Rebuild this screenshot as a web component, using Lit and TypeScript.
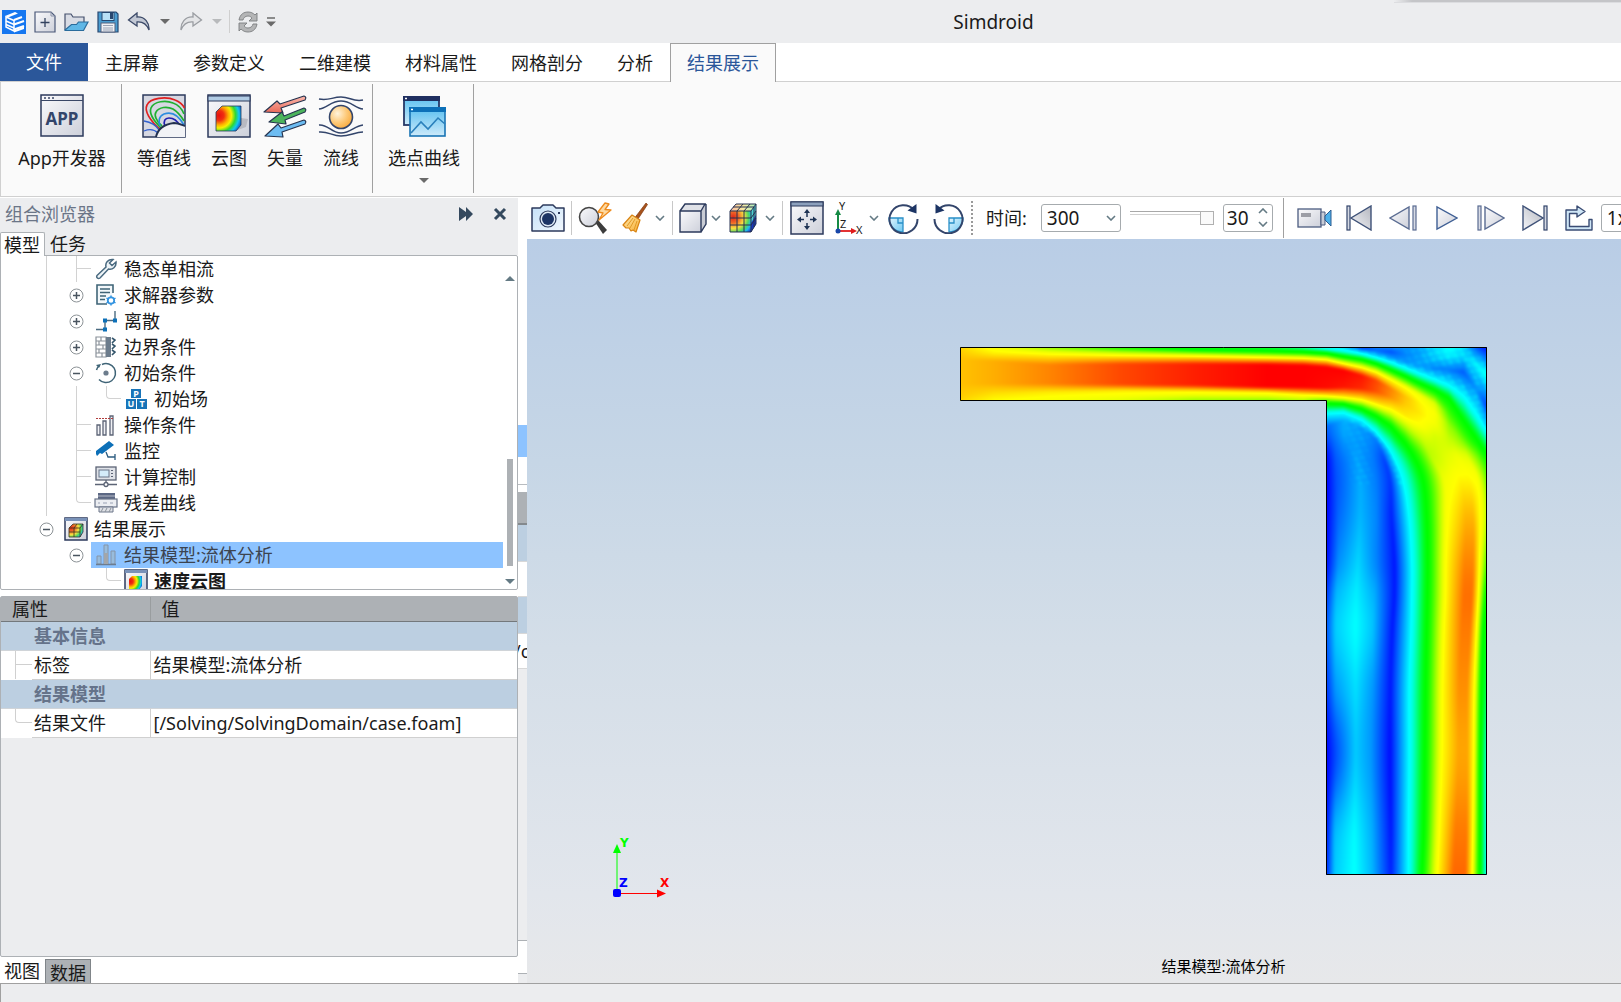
import { LitElement, html, svg, css, nothing } from "lit";
import { customElement, property, state } from "lit/decorators.js";
import { classMap } from "lit/directives/class-map.js";

type Knot = [number, number];
type Profile = { at: number; k: Knot[] };

/* Plot space: 56..1504 across, 48..1524 down. Each profile holds [position, speed] knots. */
const COLUMNS: Profile[] = [
  { at: 56, k: [[40, 0.77], [41, 0.77], [42, 0.77], [43, 0.77], [48, 0.79], [62, 0.8], [85, 0.81], [150, 0.81], [185, 0.8], [199, 0.79], [260, 0.5], [300, 0.3], [420, 0.1]] },
  { at: 150, k: [[40, 0.68], [41, 0.68], [42, 0.68], [44, 0.7], [48, 0.73], [64, 0.76], [88, 0.83], [150, 0.83], [178, 0.78], [199, 0.75], [260, 0.5], [300, 0.3], [420, 0.1]] },
  { at: 300, k: [[40, 0.6], [41, 0.6], [42, 0.6], [44, 0.62], [48, 0.63], [70, 0.76], [98, 0.87], [150, 0.87], [174, 0.77], [199, 0.73], [260, 0.5], [300, 0.3], [420, 0.1]] },
  { at: 500, k: [[40, 0.5], [41, 0.5], [42, 0.5], [44, 0.52], [50, 0.54], [73, 0.76], [96, 0.93], [152, 0.93], [170, 0.77], [199, 0.7], [230, 0.5], [270, 0.3], [420, 0.1]] },
  { at: 700, k: [[36, 0.4], [38, 0.4], [40, 0.4], [42, 0.4], [56, 0.51], [74, 0.75], [96, 0.97], [154, 0.97], [171, 0.77], [198, 0.64], [220, 0.5], [250, 0.3], [420, 0.1]] },
  { at: 900, k: [[36, 0.3], [38, 0.3], [40, 0.3], [42, 0.36], [59, 0.5], [78, 0.75], [97, 1], [159, 1], [174, 0.77], [196, 0.64], [214, 0.5], [240, 0.3], [420, 0.1]] },
  { at: 1000, k: [[36, 0.25], [38, 0.25], [40, 0.25], [46, 0.3], [62, 0.5], [80, 0.75], [99, 1], [160, 1], [180, 0.77], [197, 0.66], [212, 0.5], [240, 0.25], [420, 0.05]] },
  { at: 1063, k: [[48, 0.27], [49, 0.27], [50, 0.26], [52, 0.27], [66, 0.5], [84, 0.75], [104, 1], [162, 0.99], [184, 0.76], [206, 0.5], [235, 0.25], [270, 0.1], [420, 0]] },
  { at: 1110, k: [[48, 0.2], [50, 0.22], [52, 0.23], [57, 0.25], [75, 0.5], [95, 0.75], [113, 1], [160, 0.98], [188, 0.76], [208, 0.5], [232, 0.25], [254, 0.17], [420, 0.14]] },
  { at: 1160, k: [[48, 0.05], [52, 0.08], [58, 0.16], [66, 0.25], [83, 0.5], [106, 0.75], [128, 0.98], [164, 0.96], [193, 0.77], [222, 0.5], [252, 0.25], [276, 0.15], [420, 0.18]] },
  { at: 1200, k: [[48, 0.13], [58, 0.1], [66, 0.16], [77, 0.25], [95, 0.5], [119, 0.75], [142, 0.93], [172, 0.92], [204, 0.78], [242, 0.5], [286, 0.25], [306, 0.12], [420, 0.13]] },
  { at: 1240, k: [[48, 0.14], [62, 0.08], [76, 0.14], [90, 0.25], [112, 0.5], [140, 0.75], [165, 0.87], [188, 0.86], [220, 0.76], [270, 0.5], [342, 0.25], [366, 0.1], [420, 0.05]] },
  { at: 1280, k: [[48, 0.15], [68, 0.13], [90, 0.15], [106, 0.25], [130, 0.5], [162, 0.75], [188, 0.81], [208, 0.8], [240, 0.77], [318, 0.5], [450, 0.25], [500, 0.1], [600, 0.05]] },
  { at: 1320, k: [[48, 0.16], [80, 0.16], [104, 0.16], [122, 0.25], [150, 0.5], [184, 0.73], [205, 0.76], [232, 0.77], [262, 0.75], [392, 0.5], [700, 0.25], [800, 0.2], [900, 0.1]] },
  { at: 1360, k: [[48, 0.22], [78, 0.2], [108, 0.13], [138, 0.25], [168, 0.5], [206, 0.7], [234, 0.74], [262, 0.73], [300, 0.69], [420, 0.65], [700, 0.6], [800, 0.5], [900, 0.4]] },
  { at: 1400, k: [[48, 0.26], [76, 0.23], [112, 0.12], [155, 0.25], [192, 0.5], [240, 0.59], [268, 0.64], [300, 0.67], [340, 0.7], [420, 0.75], [500, 0.75], [600, 0.75], [700, 0.75]] },
  { at: 1440, k: [[48, 0.22], [76, 0.21], [118, 0.09], [184, 0.25], [254, 0.5], [290, 0.57], [320, 0.64], [350, 0.69], [380, 0.73], [420, 0.76], [500, 0.78], [600, 0.8], [700, 0.8]] },
  { at: 1475, k: [[48, 0.08], [95, 0.24], [165, 0.15], [236, 0.25], [305, 0.5], [345, 0.58], [375, 0.66], [400, 0.71], [420, 0.74], [450, 0.76], [500, 0.78], [600, 0.8], [700, 0.8]] },
  { at: 1504, k: [[48, 0.01], [128, 0.27], [215, 0.06], [284, 0.25], [348, 0.5], [385, 0.55], [405, 0.58], [420, 0.6], [450, 0.65], [480, 0.68], [520, 0.68], [600, 0.6], [700, 0.55]] },
];

const ROWS: Profile[] = [
  { at: 250, k: [[1063, 0.12], [1085, 0.18], [1110, 0.2], [1130, 0.2], [1145, 0.22], [1158, 0.25], [1212, 0.5], [1265, 0.73], [1300, 0.77], [1350, 0.74], [1390, 0.62], [1438, 0.5], [1504, 0.16]] },
  { at: 300, k: [[1063, 0.05], [1085, 0.11], [1130, 0.15], [1170, 0.14], [1192, 0.13], [1212, 0.25], [1264, 0.5], [1322, 0.7], [1360, 0.7], [1400, 0.68], [1430, 0.61], [1472, 0.5], [1504, 0.32]] },
  { at: 350, k: [[1063, 0.01], [1088, 0.09], [1145, 0.16], [1190, 0.12], [1218, 0.07], [1244, 0.25], [1300, 0.5], [1348, 0.67], [1385, 0.7], [1420, 0.72], [1448, 0.7], [1480, 0.6], [1504, 0.5]] },
  { at: 420, k: [[1063, 0], [1090, 0.08], [1155, 0.17], [1200, 0.12], [1238, 0.05], [1272, 0.25], [1328, 0.5], [1385, 0.72], [1430, 0.76], [1455, 0.76], [1478, 0.74], [1495, 0.66], [1504, 0.6]] },
  { at: 520, k: [[1063, 0], [1095, 0.1], [1155, 0.18], [1200, 0.13], [1242, 0.03], [1289, 0.25], [1338, 0.5], [1392, 0.74], [1444, 0.82], [1466, 0.82], [1485, 0.75], [1498, 0.7], [1504, 0.65]] },
  { at: 650, k: [[1063, 0.01], [1095, 0.14], [1150, 0.21], [1200, 0.13], [1250, 0.02], [1297, 0.25], [1341, 0.5], [1391, 0.75], [1442, 0.87], [1466, 0.87], [1483, 0.75], [1499, 0.62], [1504, 0.58]] },
  { at: 740, k: [[1063, 0.05], [1090, 0.18], [1145, 0.235], [1195, 0.17], [1250, 0.02], [1297, 0.25], [1340, 0.5], [1390, 0.75], [1440, 0.89], [1463, 0.89], [1480, 0.75], [1497, 0.55], [1504, 0.51]] },
  { at: 840, k: [[1063, 0.08], [1088, 0.2], [1143, 0.25], [1190, 0.19], [1244, 0.02], [1295, 0.25], [1338, 0.5], [1386, 0.75], [1434, 0.88], [1458, 0.88], [1475, 0.75], [1494, 0.5], [1504, 0.47]] },
  { at: 1000, k: [[1063, 0.05], [1088, 0.15], [1143, 0.22], [1190, 0.15], [1239, 0.02], [1290, 0.25], [1335, 0.5], [1382, 0.75], [1427, 0.86], [1450, 0.86], [1469, 0.75], [1489, 0.5], [1504, 0.4]] },
  { at: 1190, k: [[1063, 0], [1090, 0.08], [1143, 0.2], [1185, 0.15], [1238, 0.01], [1290, 0.25], [1333, 0.5], [1380, 0.75], [1425, 0.84], [1450, 0.84], [1467, 0.75], [1486, 0.5], [1504, 0.3]] },
  { at: 1400, k: [[1063, 0.02], [1086, 0.18], [1140, 0.245], [1188, 0.17], [1240, 0.02], [1288, 0.25], [1330, 0.5], [1373, 0.75], [1417, 0.88], [1448, 0.88], [1465, 0.75], [1485, 0.5], [1504, 0.27]] },
  { at: 1524, k: [[1063, 0.04], [1086, 0.2], [1140, 0.255], [1188, 0.18], [1240, 0.03], [1288, 0.25], [1325, 0.5], [1368, 0.75], [1412, 0.9], [1445, 0.9], [1463, 0.75], [1484, 0.5], [1504, 0.26]] },
];

const clamp = (v: number) => Math.max(0, Math.min(1, v));
const smooth = (t: number) => t * t * (3 - 2 * t);

function segment(list: Profile[], at: number): [number, number] {
  let i = 0;
  while (i < list.length - 2 && at > list[i + 1].at) i++;
  return [i, clamp((at - list[i].at) / (list[i + 1].at - list[i].at))];
}

function linearProfile(list: Profile[], at: number): Knot[] {
  const [i, t] = segment(list, at);
  const a = list[i].k;
  const b = list[i + 1].k;
  return a.map((p, n) => [p[0] + (b[n][0] - p[0]) * t, p[1] + (b[n][1] - p[1]) * t] as Knot);
}

function curvedProfile(list: Profile[], at: number): Knot[] {
  const [i, t] = segment(list, at);
  const span = list[i + 1].at - list[i].at;
  const slope = (j: number, n: number, c: 0 | 1) => {
    const lo = list[Math.max(0, j - 1)];
    const hi = list[Math.min(list.length - 1, j + 1)];
    return ((hi.k[n][c] - lo.k[n][c]) / (hi.at - lo.at)) * span;
  };
  const t2 = t * t;
  const t3 = t2 * t;
  const mix = (n: number, c: 0 | 1) =>
    (2 * t3 - 3 * t2 + 1) * list[i].k[n][c] + (t3 - 2 * t2 + t) * slope(i, n, c) +
    (3 * t2 - 2 * t3) * list[i + 1].k[n][c] + (t3 - t2) * slope(i + 1, n, c);
  return list[i].k.map((_, n) => [mix(n, 0), mix(n, 1)] as Knot);
}

function sample(k: Knot[], p: number): number {
  if (p <= k[0][0]) return k[0][1];
  for (let i = 1; i < k.length; i++) {
    if (p <= k[i][0]) {
      const t = (p - k[i - 1][0]) / Math.max(0.001, k[i][0] - k[i - 1][0]);
      return k[i - 1][1] + (k[i][1] - k[i - 1][1]) * t;
    }
  }
  return k[k.length - 1][1];
}

/* Hue ramp from blue to red that lingers on its cyan, green and yellow stops. */
function rainbow(v: number): [number, number, number] {
  const raw = clamp(v) * 4;
  const band = Math.min(3, Math.floor(raw));
  const part = raw - band;
  const t = (band === 1 || band === 2 ? smooth(part) * 0.7 + part * 0.3 : part) * 255;
  if (band === 0) return [0, t, 255];
  if (band === 1) return [0, 255, 255 - t];
  if (band === 2) return [t, 255, 0];
  return [255, 255 - t, 0];
}

@customElement("flow-field")
export class FlowField extends LitElement {
  static styles = css`
    :host { display: block; }
    canvas { display: block; width: 100%; height: 100%; }
  `;
  private w = 527;
  private h = 528;

  firstUpdated() {
    const canvas = this.renderRoot.querySelector("canvas") as HTMLCanvasElement;
    const ctx = canvas.getContext("2d")!;
    const { w, h } = this;
    const px = (i: number) => 56 + ((i + 0.5) / w) * 1448;
    const py = (j: number) => 48 + ((j + 0.5) / h) * 1476;
    const cols = Array.from({ length: w }, (_, i) => linearProfile(COLUMNS, px(i)));
    const rows = Array.from({ length: h }, (_, j) => curvedProfile(ROWS, py(j)));
    const edgeX = 366;
    const edgeY = 53;
    let field = new Float32Array(w * h);
    for (let j = 0; j < h; j++) {
      const y = py(j);
      const mix = smooth(clamp((y - 265) / 110));
      for (let i = 0; i < w; i++) {
        if (i < edgeX && j > edgeY + 6) continue;
        const x = px(i);
        const c = mix < 1 ? sample(cols[i], y) : 0;
        const r = mix > 0 ? sample(rows[j], x) : 0;
        let v = c * (1 - mix) + r * mix;
        /* stair-stepped mesh cells along the edge of the slow zones */
        if (i > 380 && v < 0.26 && y < 430) {
          const near = clamp(1 - Math.abs(v - 0.19) / 0.07);
          const saw = (((x - y * 0.5) / 22) % 1 + 1) % 1;
          const step = (((y + x * 0.2) / 18) % 1 + 1) % 1;
          v += (saw * step - 0.25) * 0.07 * near * clamp((x - 1100) / 60);
        }
        field[j * w + i] = v;
      }
    }
    for (let pass = 0; pass < 2; pass++) {
      const out = new Float32Array(w * h);
      for (let j = 0; j < h; j++) {
        for (let i = 0; i < w; i++) {
          if (i < edgeX && j > edgeY + 2) continue;
          let s = 0;
          let m = 0;
          for (let b = -1; b <= 1; b++) {
            for (let a = -1; a <= 1; a++) {
              const x = i + a;
              const y = j + b;
              if (x < 0 || y < 0 || x >= w || y >= h) continue;
              if (x < edgeX && y > edgeY + 2) continue;
              s += field[y * w + x];
              m++;
            }
          }
          out[j * w + i] = s / m;
        }
      }
      field = out;
    }
    const img = ctx.createImageData(w, h);
    for (let j = 0; j < h; j++) {
      for (let i = 0; i < w; i++) {
        if (i < edgeX && j > edgeY) continue;
        const [r, g, b] = rainbow(field[j * w + i]);
        const o = (j * w + i) * 4;
        img.data[o] = r;
        img.data[o + 1] = g;
        img.data[o + 2] = b;
        img.data[o + 3] = 255;
      }
    }
    ctx.putImageData(img, 0, 0);
    ctx.strokeStyle = "#000";
    ctx.lineWidth = 1;
    ctx.beginPath();
    ctx.moveTo(0.5, 0.5);
    ctx.lineTo(w - 0.5, 0.5);
    ctx.lineTo(w - 0.5, h - 0.5);
    ctx.lineTo(edgeX + 0.5, h - 0.5);
    ctx.lineTo(edgeX + 0.5, edgeY + 0.5);
    ctx.lineTo(0.5, edgeY + 0.5);
    ctx.closePath();
    ctx.stroke();
  }

  render() {
    return html`<canvas width=${this.w} height=${this.h} role="img" aria-label="速度云图"></canvas>`;
  }
}

const N = "#2c3a5c";

const defs = html`<svg class="defs" width="0" height="0" aria-hidden="true"><defs>
  <linearGradient id="gSteel" x1="0" y1="0" x2="1" y2="1"><stop offset="0" stop-color="#fafafc"/><stop offset="1" stop-color="#cdd0da"/></linearGradient>
  <linearGradient id="gSteelR" x1="0" y1="1" x2="1" y2="0"><stop offset="0" stop-color="#f4f5f8"/><stop offset="1" stop-color="#b4b7c0"/></linearGradient>
  <linearGradient id="gBlue" x1="0" y1="0" x2="0" y2="1"><stop offset="0" stop-color="#5bc0f0"/><stop offset="1" stop-color="#cdeafa"/></linearGradient>
  <linearGradient id="gSky" x1="0" y1="0" x2="1" y2="1"><stop offset="0" stop-color="#c4e0f8"/><stop offset="1" stop-color="#f2f8fd"/></linearGradient>
  <linearGradient id="gQuad" x1="0" y1="0" x2="1" y2="1"><stop offset="0" stop-color="#e2f5fe"/><stop offset="1" stop-color="#6cc8f2"/></linearGradient>
  <linearGradient id="gRed" x1="0" y1="0" x2="0" y2="1"><stop offset="0" stop-color="#fcb8ac"/><stop offset="1" stop-color="#e86858"/></linearGradient>
  <radialGradient id="gOrb" cx=".35" cy=".35" r=".8"><stop offset="0" stop-color="#fff3dc"/><stop offset=".5" stop-color="#fdc978"/><stop offset="1" stop-color="#f6a02c"/></radialGradient>
  <radialGradient id="gHeat" cx=".12" cy=".38" r="1"><stop offset="0" stop-color="#e81010"/><stop offset=".2" stop-color="#f03010"/><stop offset=".38" stop-color="#ffb000"/><stop offset=".5" stop-color="#f6f000"/><stop offset=".66" stop-color="#30d830"/><stop offset=".8" stop-color="#10c8f0"/><stop offset="1" stop-color="#1030c0"/></radialGradient>
  <radialGradient id="gCube" cx=".15" cy=".3" r="1.05"><stop offset="0" stop-color="#e02818"/><stop offset=".25" stop-color="#f06828"/><stop offset=".5" stop-color="#f8e040"/><stop offset=".7" stop-color="#50d860"/><stop offset=".85" stop-color="#20b8f0"/><stop offset="1" stop-color="#1838c8"/></radialGradient>
  <linearGradient id="gTop" x1="0" y1="0" x2="1" y2="0"><stop offset="0" stop-color="#f8b8a0"/><stop offset=".5" stop-color="#f8e8a0"/><stop offset="1" stop-color="#a8f0c0"/></linearGradient>
  <linearGradient id="gFlame" x1="0" y1="0" x2="1" y2="1"><stop offset="0" stop-color="#ffe9b0"/><stop offset="1" stop-color="#f8ae30"/></linearGradient>
</defs></svg>`;

const windowFrame = (w: number, h: number) => svg`
  <rect x="1" y="1" width="${w - 2}" height="${h - 2}" fill="url(#gSteel)" stroke="${N}" stroke-width="1.5"/>`;

const ICONS: Record<string, [number, number, unknown]> = {
  logo: [24, 24, svg`<rect width="24" height="24" fill="#1677f0"/>
    <g fill="none" stroke="#fff" stroke-width="2"><path d="M12 10 20 7M12 14.500 22 11M12 19.500 22 16"/><path d="M4 7v10l8 4V10.500z" stroke-width="1.500"/><path d="M4 11l8 3.500M4 14.500l8 3.500" stroke-width="1.500"/></g>
    <path d="M3 6 13 2l3 1.500L6 7.500zM12 20.500 22 16.500v2.500l-10 3.500z" fill="#fff"/>`],
  fresh: [22, 22, svg`<path d="M1 1h16l4 4v16H1z" fill="url(#gSteel)" stroke="#4a5878" stroke-width="1.200"/><path d="M17 1v4h4" fill="none" stroke="#8a93a8"/><path d="M11 7v9M6.500 11.500h9" stroke="#33425f" stroke-width="1.300"/>`],
  open: [25, 20, svg`<path d="M1 18V2h6l2 3h11v5" fill="#d9dce4" stroke="#44506c" stroke-width="1.200"/><path d="M1 18 7.500 12.500h5l2-2.500H24l-4.500 8.500H1z" fill="#5fb7e6" stroke="#2a6c9c" stroke-width="1.200"/>`],
  save: [22, 22, svg`<path d="M1 1h18l2 2v18H1z" fill="#4a9cd0" stroke="#27476f" stroke-width="1.200"/><rect x="5" y="1.500" width="12" height="8" fill="#b8e0f6" stroke="#27476f"/><rect x="13" y="2" width="3" height="6" fill="#27476f"/><rect x="4" y="12" width="14" height="9" fill="#eef0f4" stroke="#55617c"/><path d="M6 14.500h10M6 17h10M6 19h10" stroke="#9aa2b4"/>`],
  undo: [24, 20, svg`<path d="M10 1 1.500 8 10 14v-4c6-.5 10 3 12 8 .5-7-4-13.500-12-13z" fill="#c2c8d4" stroke="#3c4a68" stroke-width="1.300"/>`],
  redo: [24, 20, svg`<path d="M14 1l8.500 7-8.500 6v-4C8 9.500 4 13 2 18 1.500 11 6 4.500 14 5z" fill="#e4e5e7" stroke="#9a9da2" stroke-width="1.300"/>`],
  sync: [20, 22, svg`<path d="M1 9C2 3 6 1 10 1c3 0 5 1 7 3l2-2v8h-8l3-3c-1-1-2-2-4-2-3 0-4.500 2-5 4z" fill="#b4b5b6" stroke="#7c7e80" stroke-width=".9"/><path d="M19 13c-1 6-5 8-9 8-3 0-5-1-7-3l-2 2v-8h8l-3 3c1 1 2 2 4 2 3 0 4.500-2 5-4z" fill="#b4b5b6" stroke="#7c7e80" stroke-width=".9"/>`],
  more: [10, 10, svg`<path d="M1 1h8" stroke="#6a6a6a" stroke-width="1.500"/><path d="M0 4.500h10L5 9.500z" fill="#6a6a6a"/>`],
  app: [44, 44, svg`${windowFrame(44, 43)}<path d="M1 6.500h42" stroke="#3a4766"/><path d="M4 4h2M8 4h2M12 4h2" stroke="#3a4766" stroke-width="1.500"/><text x="22" y="31" text-anchor="middle" class="appword">APP</text>`],
  contour: [44, 44, svg`<rect x="1" y="1" width="42" height="42" fill="#d6d8e2" stroke="${N}" stroke-width="1.500"/>
    <g fill="none" stroke-width="1.700"><path d="M19 36C8 27 2 17 5 11 8 4 24 2 33 6c5 2 8 5 9.500 8" stroke="#e02020"/><path d="M19 34C11 26 7 19 9 14c3-7 15-8 22-5 6 2 9 6 11 11" stroke="#20b030"/><path d="M20 32c-6-5-8-11-6-14 3-5 11-6 17-3 5 3 8 7 11 12" stroke="#20b030"/><path d="M18 32c-2-5-1-10 4-12 8-3 15 2 20 11" stroke="#2c8ce0"/><path d="M23 32c-2-5 0-8 4-8 5 0 9 4 11 8" stroke="#2020b0"/><path d="M2 27c6 1 12 4 15 9M2 37c5-2 10-2 14 2" stroke="#3060d0" stroke-width="1.300"/></g>
    <path d="M14 43c2-9 10-13 18-14 4 0 8 2 11 3v11z" fill="#f2f3f6"/><path d="M14 43c2-9 10-13 18-14 4 0 8 2 11 3" fill="none" stroke="#22304e" stroke-width="2"/>`],
  cloud: [44, 44, svg`${windowFrame(44, 44)}<rect x="1" y="2" width="42" height="5" fill="#b0cbe4" stroke="${N}"/><path d="M34 24l7 1-2 8-11 4z" fill="#b8bac2"/><path d="M15 12h19v19l-5 6H9V18z" fill="url(#gHeat)" stroke="#263a5a" stroke-width=".8"/>`],
  vector: [44, 44, svg`<g stroke="#26344f" stroke-width="1.200" stroke-linejoin="round"><path d="M17 10 41 2q3 1 1 4L18 14l2 5-19-1L14 7z" fill="url(#gRed)"/><path d="M21 22 41 14q3 1 1 4L22 26l1 4-17-2 13-10z" fill="#4cb45c"/><path d="M18 34 41 26q3 1 1 4L19 38l1 5-18-1 13-12z" fill="#6cbcf2"/></g>`],
  stream: [46, 44, svg`<g fill="none" stroke="#33456b" stroke-width="1.500"><path d="M1 5c10 2 13-2 22-2s12 5 22 3M1 15c8-1 12-8 22-8s14 7 22 8M1 31c9-1 12 8 22 8s13-7 22-8M1 38c9-1 13 4 22 4s14-4 22-4"/></g><circle cx="23" cy="23" r="11.500" fill="url(#gOrb)" stroke="#33456b" stroke-width="1.600"/>`],
  curves: [44, 44, svg`<rect x="2" y="3" width="35" height="28" fill="url(#gBlue)" stroke="#263866" stroke-width="1.800"/><rect x="1" y="2" width="37" height="5" fill="#1f2f60"/><rect x="8" y="14" width="35" height="28" fill="url(#gBlue)" stroke="#1874b4" stroke-width="1.600"/><rect x="7" y="13" width="37" height="5" fill="#0c70b8"/><path d="M9 39 19 28l7 7L36 24l7 6" fill="none" stroke="#2a80bc" stroke-width="1.600"/><path d="M3 4.500h2M9 15.500h2" stroke="#fff" stroke-width="1.500"/>`],
  pin: [16, 16, svg`<path d="M1 1l7 5V1l7 7-7 7V10l-7 5z" fill="#34495e"/>`],
  close: [14, 14, svg`<path d="M2 2l10 10M12 2 2 12" stroke="#34495e" stroke-width="3"/>`],
  camera: [34, 28, svg`<path d="M1 4h8l3-3h10l3 3h8v23H1z" fill="url(#gSky)" stroke="${N}" stroke-width="1.500" stroke-linejoin="round"/><circle cx="17" cy="15" r="8" fill="#dfeaf5" stroke="${N}" stroke-width="1.200"/><circle cx="17" cy="15" r="6" fill="#1c3464"/><rect x="27" y="8" width="2" height="2" fill="${N}"/>`],
  magnify: [34, 32, svg`<path d="M17 20l3-2 9 10-4 4z" fill="#3c3c3c"/><circle cx="11" cy="15" r="9.500" fill="url(#gSteel)" stroke="#444" stroke-width="1.600"/><path d="M27 1 20 10l5 1-4 7 12-10-6-.5 4-5.500z" fill="#fdd9a0" stroke="#ee8a1c" stroke-width="1.300" stroke-linejoin="round"/>`],
  broom: [26, 32, svg`<path d="M24 1l1.500 1.500L16 17l-3-1.500z" fill="#a8521c" stroke="#7c3a10" stroke-width=".7"/><path d="M10 13l8 5-4 12-3-2-2 1-2-3-3 0-3-3z" fill="url(#gFlame)" stroke="#d88414" stroke-width="1.200" stroke-linejoin="round"/><path d="M8 26l5-9M12 28l3-9M5 24l6-8" stroke="#e09a28" fill="none"/>`],
  cube: [28, 30, svg`<path d="M1 9 6 1h21v20l-4 8H1z" fill="#c9ccd4"/><rect x="1" y="8" width="21" height="21" fill="url(#gSteel)"/><path d="M1 8l5-7h21l-5 7z" fill="#dfe1e7"/><path d="M1 8h21v21H1zM1 8l5-7h20l-4 7M27 1v20l-5 8" fill="none" stroke="${N}" stroke-width="1.400"/>`],
  meshcube: [28, 30, svg`<rect x="1" y="8" width="21" height="21" fill="url(#gCube)"/><path d="M1 8l6-7h20l-5 7z" fill="url(#gTop)"/><path d="M22 8l5-7v20l-5 8z" fill="#4fd0d0"/><path d="M22 20l5-8v9l-5 8z" fill="#1838c0"/><path d="M1 8h21v21H1zM1 8l6-7h20l-5 7M27 1v20l-5 8M8 8v21M15 8v21M1 15h21M1 22h21M8 8l6-7M15 8l6-7M4 4h21v20M22 15l5-7M22 22l5-7" fill="none" stroke="#263050" stroke-width="1"/>`],
  fit: [34, 34, svg`<rect x="1" y="1" width="32" height="32" fill="url(#gSteel)" stroke="${N}" stroke-width="1.500"/><rect x="1" y="1" width="32" height="4" fill="#8ca0bc" stroke="${N}"/><path d="M17 11v5M17 22v5M9 18.500h5M20 18.500h5" stroke="#1e3354" stroke-width="1.500"/><path d="M17 8l3 4h-6zM17 29l3-4h-6zM7 18.500l4-3v6zM27 18.500l-4-3v6z" fill="#1e3354"/>`],
  axes: [30, 34, svg`<path d="M4 30V12" stroke="#168a44" stroke-width="2"/><path d="M4 8l3 6H1z" fill="#168a44"/><path d="M4 30h14" stroke="#e01c1c" stroke-width="1.800"/><path d="M23 30l-6-3v6z" fill="#e01c1c"/><circle cx="4" cy="30" r="2.500" fill="#1846a8"/><text x="5" y="9" class="axisword">Y</text><text x="6" y="27" class="axisword">Z</text><text x="22" y="33" class="axisword">X</text>`],
  rotcw: [32, 32, svg`<path d="M16 16H2c0 8 6 14 14 14z" fill="url(#gQuad)" stroke="#2a90c8" stroke-width="1.300"/><path d="M11 16v5h5" fill="none" stroke="#2a90c8" stroke-width="1.300"/><path d="M27 8A14 14 0 1 0 30.500 17" fill="none" stroke="#33456b" stroke-width="2"/><path d="M29.500 2v9.500l-9-3z" fill="#1c3464"/>`],
  rotccw: [32, 32, svg`<path d="M16 16h14c0 8-6 14-14 14z" fill="url(#gQuad)" stroke="#2a90c8" stroke-width="1.300"/><path d="M21 16v5h-5" fill="none" stroke="#2a90c8" stroke-width="1.300"/><path d="M5 8A14 14 0 1 1 1.500 17" fill="none" stroke="#33456b" stroke-width="2"/><path d="M2.500 2v9.500l9-3z" fill="#1c3464"/>`],
  video: [36, 20, svg`<rect x="1" y="1" width="23" height="18" fill="url(#gSteel)" stroke="#4c5c80" stroke-width="1.300"/><rect x="4" y="5" width="10" height="4" fill="#9c9ea6"/><path d="M24 4h4v13h-4z" fill="#c8ccd6" stroke="#4c5c80"/><path d="M28 8l6-6v16l-6-6z" fill="#4cb0ea" stroke="#2c5c90"/>`],
  first: [26, 26, svg`<rect x="1" y="1" width="3" height="24" fill="#d6dae4" stroke="#33456b" stroke-width="1.200"/><path d="M25 1v24L5 13z" fill="url(#gSteelR)" stroke="#3f5278" stroke-width="1.400"/>`],
  prev: [28, 26, svg`<path d="M20 2v22L1 13z" fill="url(#gSteel)" stroke="#5a6c92" stroke-width="1.400"/><rect x="24" y="1" width="3" height="24" fill="#d6dae4" stroke="#5a6c92" stroke-width="1.200"/>`],
  play: [22, 26, svg`<path d="M1 2v22l20-11z" fill="url(#gSteel)" stroke="#3f5f94" stroke-width="1.400"/>`],
  next: [28, 26, svg`<path d="M8 2v22l19-11z" fill="url(#gSteel)" stroke="#5a6c92" stroke-width="1.400"/><rect x="1" y="1" width="3" height="24" fill="#d6dae4" stroke="#5a6c92" stroke-width="1.200"/>`],
  last: [26, 26, svg`<rect x="22" y="1" width="3" height="24" fill="#d6dae4" stroke="#33456b" stroke-width="1.200"/><path d="M1 1v24l20-12z" fill="url(#gSteelR)" stroke="#3f5278" stroke-width="1.400"/>`],
  loop: [28, 26, svg`<path d="M1 5h11V1l8 5.500-8 5.500V8.500H4.500v13H24v-7h3v10.500H1z" fill="#cfe6f6" stroke="#3a4c74" stroke-width="1.400" stroke-linejoin="round"/>`],
  wrench: [22, 22, svg`<path d="M2 17.500 11 9c-1-4 2-8 7-7.500L14.500 5l2.500 2.500L21 4c.5 5-3.500 8-7.500 7L5 20c-2 1.500-4-.5-3-2.500z" fill="#eef4f7" stroke="#4a6a80" stroke-width="1.500"/>`],
  solver: [22, 22, svg`<path d="M18 9V1H2v19h10" fill="#f2f7fa" stroke="#3f6477" stroke-width="1.600"/><path d="M5 5h10M5 8.500h10M5 12h6M5 15.500h5" stroke="#3f6477" stroke-width="1.400"/><circle cx="16" cy="16.500" r="3.200" fill="#fff" stroke="#3494e0" stroke-width="1.800"/><path d="M16 11.500v2M16 19.500v2M11.500 14l1.500 1M19 18l1.500 1M11.500 19l1.500-1M19 15l1.500-1" stroke="#3494e0" stroke-width="1.500"/>`],
  discrete: [22, 22, svg`<path d="M1 19.500h9V10.500h10V1" fill="none" stroke="#4a6a80" stroke-width="1.400"/><path d="M8 17.500h4v4H8zM8 8.500h4v4H8zM18 8.500h4v4h-4z" fill="#0d70b8"/>`],
  brick: [22, 22, svg`<path d="M1 1h10v20H1zM1 5h10M1 9h10M1 13h10M1 17h10M6 1v4M4 5v4M8 9v4M4 13v4M7 17v4" fill="#fff" stroke="#8a929a" stroke-width="1.200"/><rect x="11" y="1" width="5" height="20" fill="#6c7c8c"/><path d="M17 2l3 2-3 3M17 8l3 2-3 3M17 14l3 2-3 3" fill="none" stroke="#34566c" stroke-width="1.600"/>`],
  initial: [22, 22, svg`<path d="M7 2.500A9.500 9.500 0 1 1 4 17.500M1.500 8C2 6 3 4.500 4.500 3.500" fill="none" stroke="#3f6477" stroke-width="1.500"/><circle cx="11" cy="11" r="2.600" fill="#6c7c8c"/><path d="M1 3l5-1-2 4z" fill="#3f6477"/>`],
  blocks: [22, 22, svg`<path d="M6 1h10v9H6zM1 11h10v10H1zM12 11h10v10H12z" fill="#1874b8"/><text x="11" y="9" text-anchor="middle" class="blockword">P</text><text x="6" y="19" text-anchor="middle" class="blockword">U</text><text x="17" y="19" text-anchor="middle" class="blockword">T</text>`],
  bars: [22, 22, svg`<path d="M2 11h3v10H2zM8 7h3v14H8zM15 2h3v19h-3z" fill="#f0f1f5" stroke="#5c6476" stroke-width="1.300"/><path d="M1 4.500h18" stroke="#b03c3c" stroke-dasharray="2 1"/>`],
  monitor: [22, 22, svg`<path d="M1 11 14 1l5 4L7 14l-2-1-3 3-1-2z" fill="#0d70b8"/><path d="M11 12l2 5h7M20 14v6" fill="none" stroke="#2c5c80" stroke-width="1.300"/>`],
  compute: [24, 22, svg`<rect x="2" y="1" width="20" height="13" fill="#dfe2e8" stroke="#5c6476" stroke-width="1.300"/><rect x="5" y="4" width="10" height="7" fill="#d4ecfa" stroke="#6a7488"/><path d="M18 4v1M18 7v1M18 10v1" stroke="#5c6476" stroke-width="2"/><path d="M12 14v3M1 18.500h9M14 18.500h9" stroke="#5c6476" stroke-width="1.300"/><circle cx="12" cy="18.500" r="2" fill="none" stroke="#5c6476" stroke-width="1.300"/>`],
  residual: [24, 22, svg`<rect x="4" y="1" width="17" height="7" fill="#5c6884"/><path d="M4 4h17" stroke="#b8bcc8"/><rect x="1" y="7" width="22" height="8" fill="#eceef2" stroke="#6a7488" stroke-width="1.200"/><path d="M4 11h2M9 11h4M16 11h3" stroke="#9aa2b4"/><path d="M5 15h14v5H5z" fill="#dfe1e6" stroke="#6a7488"/><path d="M7 20l2-4M11 20l2-4M15 20l2-4" stroke="#8a929a"/>`],
  results: [24, 24, svg`<rect x="1" y="1" width="22" height="22" fill="url(#gSteel)" stroke="${N}" stroke-width="1.500"/><rect x="1" y="1" width="22" height="3" fill="#7a92b8"/><path d="M5 11l4-4h10v8l-3 5H5z" fill="url(#gCube)" stroke="#3a3020" stroke-width=".8"/><path d="M5 11h11v9M16 11l3-4M10 11v9M5 15h11M13 7l-3 4" stroke="#3a3020" stroke-width=".8" fill="none"/>`],
  ghost: [22, 22, svg`<path d="M2 12h4v8H2zM9 1h4v19H9zM16 7h4v13h-4z" fill="#98bcdc" stroke="#8494a8"/><path d="M1 20.500h20" stroke="#6c7c90" stroke-width="1.300"/><path d="M9 9h4v11H9z" fill="#a2a6aa"/>`],
  speed: [24, 24, svg`<rect x="1" y="1" width="22" height="22" fill="url(#gSteel)" stroke="${N}" stroke-width="1.500"/><rect x="1" y="1" width="22" height="3" fill="#7a92b8"/><path d="M8 7h10v10l-3 4H5V10z" fill="url(#gHeat)"/>`],
};

const icon = (name: string) => {
  const [w, h, body] = ICONS[name];
  return html`<svg class="icon" width=${w} height=${h} viewBox="0 0 ${w} ${h}" aria-hidden="true">${body}</svg>`;
};

const caret = (up = false) => html`<svg class="caret" width="10" height="6" viewBox="0 0 10 6" aria-hidden="true">
  <path d=${up ? "M1 5l4-4 4 4" : "M1 1l4 4 4-4"} fill="none" stroke="#647a84" stroke-width="1.6"/></svg>`;

const wedge = (tone: string, up = false) => html`<svg class="wedge" width="10" height="6" viewBox="0 0 10 6" aria-hidden="true">
  <path d=${up ? "M0 5h10L5 0z" : "M0 0h10L5 5z"} fill=${tone}/></svg>`;

type Guide = "none" | "line" | "tee" | "end" | "plus" | "minus";
interface Row { guides: Guide[]; icon: string; text: string; on?: boolean; strong?: boolean; }

const TREE: Row[] = [
  { guides: ["line", "tee"], icon: "wrench", text: "稳态单相流" },
  { guides: ["line", "plus"], icon: "solver", text: "求解器参数" },
  { guides: ["line", "plus"], icon: "discrete", text: "离散" },
  { guides: ["line", "plus"], icon: "brick", text: "边界条件" },
  { guides: ["line", "minus"], icon: "initial", text: "初始条件" },
  { guides: ["line", "line", "end"], icon: "blocks", text: "初始场" },
  { guides: ["line", "tee"], icon: "bars", text: "操作条件" },
  { guides: ["line", "tee"], icon: "monitor", text: "监控" },
  { guides: ["line", "tee"], icon: "compute", text: "计算控制" },
  { guides: ["line", "end"], icon: "residual", text: "残差曲线" },
  { guides: ["minus"], icon: "results", text: "结果展示" },
  { guides: ["none", "minus"], icon: "ghost", text: "结果模型:流体分析", on: true },
  { guides: ["none", "none", "end"], icon: "speed", text: "速度云图", strong: true },
];

const TABS = ["主屏幕", "参数定义", "二维建模", "材料属性", "网格剖分", "分析", "结果展示"];
const MEDIA: [string, string][] = [
  ["video", "录制"], ["first", "首帧"], ["prev", "上一帧"], ["play", "播放"],
  ["next", "下一帧"], ["last", "末帧"], ["loop", "循环"],
];

@customElement("app-root")
export class AppRoot extends LitElement {
  @property() name = "Simdroid";
  @state() private tab = "结果展示";
  @state() private frame = 30;

  static styles = css`
    :host {
      display: flex; flex-direction: column; height: 100vh; overflow: hidden;
      font-family: "Noto Sans", "Noto Sans CJK SC", sans-serif;
      font-size: 18px; line-height: 26px; color: #1a1a1a; background: #ecedef;
    }
    * { box-sizing: border-box; }
    button, input, select { font: inherit; color: inherit; margin: 0; padding: 0; border: 0; background: none; }
    button { display: flex; align-items: center; justify-content: center; white-space: nowrap; }
    svg { display: block; flex: none; }
    .defs { position: absolute; }
    .appword { font: bold 17px "Noto Sans", sans-serif; fill: #33456b; }
    .axisword { font: 11px "Noto Sans", sans-serif; fill: #222; }
    .blockword { font: bold 9px "Noto Sans", sans-serif; fill: #fff; }

    .titlebar { position: relative; display: flex; align-items: center; height: 43px; flex: none; padding-left: 2px; }
    .titlebar::after { content: ""; position: absolute; top: 0; right: 0; width: 14%; height: 2px; background: linear-gradient(90deg, #ecedef, #c4c5c8 8%); border-bottom: 1px solid #dcdde0; }
    .quick { display: flex; align-items: center; gap: 8px; }
    .quick .drop { width: 12px; }
    .quick .bar { width: 1px; height: 23px; background: #cfcfcf; margin: 0 0 0 -2px; }
    .title { flex: 1; text-align: center; padding-left: 90px; font-size: 19px; }
    .title h1 { font: inherit; margin: 0; }

    .tabs { display: flex; height: 39px; flex: none; background: #fff; border-bottom: 1px solid #d0d0d0; }
    .tabs button { padding: 0 17px; height: 39px; }
    .tabs .file { padding: 0 26px; background: #2b579a; color: #fff; height: 38px; }
    .tabs .active { color: #2b579a; background: #fafafa; border: 1px solid #a0a0a0; border-bottom: 0; padding: 0 16px; }

    .ribbon { display: flex; height: 115px; flex: none; background: #fafafa; border-left: 1px solid #d0d0d0; border-bottom: 1px solid #d0d0d0; padding: 2px 0 3px; }
    .group { display: flex; justify-content: center; border-right: 1px solid #a0a0a0; padding: 0 3px 0 5px; }
    .group:first-child { min-width: 121px; }
    .group button { flex-direction: column; justify-content: flex-start; padding: 10px 10px 0; gap: 7px; }
    .group .icon { margin: 0 -6px; height: 44px; }

    .main { display: flex; flex: 1; min-height: 0; background: #fff; padding-top: 1px; }
    .side { display: flex; flex-direction: column; width: 518px; flex: none; }
    .sidehead { display: flex; align-items: center; height: 34px; flex: none; background: #ecedef; padding: 0 11px 2px 5px; color: #6b7587; }
    .sidehead h2 { font: inherit; margin: 0; flex: 1; }
    .sidehead button { margin-left: 19px; }
    .sidetabs { display: flex; height: 23px; flex: none; background: #ecedef; }
    .sidetabs button { padding: 0 4px 0 5px; height: 24px; }
    .sidetabs .active { background: #fff; border: 1px solid #adb1b5; border-bottom: 0; padding: 0 4px 0 3px; z-index: 1; border-radius: 2px 2px 0 0; }
    .tree { display: flex; height: 335px; flex: none; background: #fff; border: 1px solid #adb1b5; border-radius: 0 2px 2px 2px; overflow: hidden; }
    .rows { flex: 1; list-style: none; margin: 0; padding: 0 0 0 30px; }
    .row { display: flex; height: 26px; }
    .guide { width: 30px; flex: none; display: grid; grid-template-columns: 15px 15px; grid-template-rows: 13px 13px; }
    .guide.line::after, .guide.tee::after { content: ""; grid-column: 2; grid-row: 1 / 3; border-left: 1px solid #d2d2d2; }
    .guide.tee::before, .guide.end::before { content: ""; grid-column: 2; grid-row: 1; border-bottom: 1px solid #d2d2d2; }
    .guide.end::before { border-left: 1px solid #d2d2d2; border-bottom-left-radius: 4px; }
    .guide button { grid-area: 1 / 1 / 3 / 3; }
    .node { flex: 1; display: flex; align-items: center; }
    .node .cell { width: 30px; display: flex; justify-content: center; flex: none; }
    .node span { padding-left: 3px; white-space: nowrap; }
    .on .node { background: #8dc3ff; color: #3c4450; }
    .strong .node { font-weight: bold; }
    .scroll { width: 14px; display: flex; flex-direction: column; align-items: center; padding: 20px 0 4px; }
    .thumb { width: 6px; height: 107px; background: #adb1b5; margin: auto 0 13px; }

    .props { flex: 1; min-height: 0; margin-top: 6px; background: #ecedef; border: 1px solid #adb1b5; border-radius: 2px; }
    table { width: 100%; border-collapse: collapse; table-layout: fixed; }
    th, td { padding: 0; text-align: left; font-weight: normal; vertical-align: middle; white-space: nowrap; }
    .c0 { width: 31px; }
    .c1 { width: 118px; }
    thead th { height: 24px; background: #adb1b5; border-bottom: 1px solid #73787c; line-height: 24px; }
    thead th:first-child { padding-left: 11px; border-right: 1px solid #999d9f; }
    thead th:last-child { padding-left: 11px; }
    tbody tr { height: 29px; background: #fff; }
    tbody .cat { background: #bccfe1; color: #65738a; }
    tbody .cat th { font-weight: 700; padding-left: 33px; line-height: 28px; border-bottom: 1px solid #d0d4d8; }
    .field th, .field .val { border-bottom: 1px solid #d0d0d0; line-height: 28px; padding-left: 2px; }
    .field .val { border-left: 1px solid #d0d0d0; padding-left: 3px; }
    .field .stem { padding-left: 14px; }
    .stem i { display: block; height: 14px; border-left: 1px solid #d0d0d0; border-bottom: 1px solid #d0d0d0; }
    .stem i + i { border-bottom: 0; }
    .stem .round { border-bottom-left-radius: 4px; margin-bottom: 14px; }
    .foot { display: flex; height: 26px; flex: none; background: #fff; padding-top: 2px; }
    .foot button { padding: 0 5px 0 4px; height: 24px; }
    .foot .active { background: #adb1b5; border: 1px solid #808589; border-bottom: 0; padding: 2px 4px 0; }

    .work { flex: 1; min-width: 0; display: flex; flex-direction: column; }
    .tools { display: flex; align-items: center; height: 41px; flex: none; padding: 0 0 2px 10px; overflow: hidden; }
    .tools > * { flex: none; }
    .tools .w36 { width: 36px; }
    .tools .w40 { width: 40px; }
    .tools .w44 { width: 44px; }
    .tools .w48 { width: 48px; }
    .tools .drop { width: 10px; height: 28px; }
    .tools .bar { width: 1px; height: 34px; background: #c8c8c8; margin: 0 3px; }
    .tools .bar.wide { margin: 0 2px 0 7px; }
    .tools .dots { height: 34px; border-left: 2px dotted #9a9a9a; margin-right: 13px; }
    .tools .full { width: 1px; height: 41px; background: #a0a0a0; margin: 0 9px 0 10px; }
    .combo { display: flex; align-items: center; width: 80px; height: 28px; border: 1px solid #a6abae; border-radius: 3px; background: #fff; margin: 0 9px 0 14px; padding-right: 4px; font-size: 19px; }
    .combo select { appearance: none; flex: 1; min-width: 0; height: 26px; padding-left: 5px; outline: 0; }
    .combo.rate { margin: 0; }
    .slider { appearance: none; width: 84px; height: 16px; background: linear-gradient(#a8a8a8, #a8a8a8) 0 1px / 100% 1px no-repeat, linear-gradient(#d0d0d0, #d0d0d0) 0 4px / 100% 1px no-repeat; margin-right: 9px; }
    .slider::-webkit-slider-thumb { appearance: none; width: 14px; height: 14px; background: #fafafa; border: 1px solid #b0b0b0; }
    .spin { display: flex; width: 50px; height: 28px; border: 1px solid #a6abae; border-radius: 3px; background: #fff; font-size: 19px; }
    .spin input { width: 33px; padding-left: 3px; outline: 0; }
    .spin div { display: flex; flex-direction: column; justify-content: space-around; }
    .spin button { width: 12px; height: 12px; }

    .stagerow { flex: 1; display: flex; min-height: 0; }
    .sliver { width: 9px; flex: none; display: flex; flex-direction: column; background: #fff; overflow: hidden; }
    .sliver div { flex: none; }
    .s-gap { height: 186px; }
    .s-sel { height: 32px; background: #8dc3ff; }
    .s-rule { height: 28px; border-bottom: 1px solid #b8bcc0; }
    .s-head { height: 33px; margin-top: 7px; background: #adb1b5; border-bottom: 2px solid #84898d; }
    .s-cat { height: 37px; background: #bccfe1; border-bottom: 1px solid #d8d8d8; }
    .s-row { height: 35px; border-bottom: 1px solid #d8d8d8; display: flex; align-items: center; width: 14px; margin-left: -4px; }
    .s-void { height: 272px; background: #ecedef; border-bottom: 1px solid #adb1b5; }
    .s-foot { height: 33px; border-bottom: 1px solid #adb1b5; }
    .s-end { height: 9px; background: #ecedef; }
    .stage { flex: 1; position: relative; min-width: 0; overflow: hidden; background: linear-gradient(#b9cde6, #c6d6e6 30%, #d4dee8 55%, #e2e6ec 88%, #e7e8ea); }
    .field2d { position: absolute; left: 433px; top: 108px; width: 527px; height: 528px; }
    .caption { position: absolute; left: 433px; top: 714px; width: 527px; text-align: center; font-size: 15px; color: #000; }
    .triad { position: absolute; left: 73px; top: 594px; }
    .tx { font: bold 12px "DejaVu Sans", sans-serif; }
    .status { height: 19px; flex: none; border-top: 1px solid #a0a0a0; border-left: 1px solid #a0a0a0; background: #ecedef; }
  `;

  private quick() {
    const b = (n: string, label: string) => html`<button aria-label=${label}>${icon(n)}</button>`;
    return html`<div class="quick">
      ${icon("logo")} ${b("fresh", "新建")} ${b("open", "打开")} ${b("save", "保存")} ${b("undo", "撤销")}
      <button class="drop" aria-label="撤销列表">${wedge("#6a6a6a")}</button>
      ${b("redo", "重做")}
      <button class="drop" aria-label="重做列表">${wedge("#b8babc")}</button>
      <i class="bar"></i> ${b("sync", "刷新")} ${b("more", "更多")}
    </div>`;
  }

  private guide(g: Guide) {
    const toggle = g === "plus" || g === "minus";
    return html`<span class="guide ${g}">${toggle
      ? html`<button aria-label=${g === "plus" ? "展开" : "折叠"}>
          <svg width="15" height="15" viewBox="0 0 15 15"><circle cx="7.500" cy="7.500" r="6.500" fill="#fff" stroke="#8c9296"/>
          <path d=${g === "plus" ? "M4 7.500h7M7.500 4v7" : "M4 7.500h7"} stroke="#4a5560" stroke-width="1.5"/></svg></button>`
      : nothing}</span>`;
  }

  private side() {
    return html`<aside class="side">
      <div class="sidehead"><h2>组合浏览器</h2>
        <button aria-label="停靠">${icon("pin")}</button><button aria-label="关闭">${icon("close")}</button></div>
      <div class="sidetabs"><button class="active">模型</button><button>任务</button></div>
      <div class="tree">
        <ul class="rows">${TREE.map((r) => html`<li class=${classMap({ row: true, on: !!r.on, strong: !!r.strong })}>
          ${r.guides.map((g) => this.guide(g))}
          <div class="node"><div class="cell">${icon(r.icon)}</div><span>${r.text}</span></div></li>`)}</ul>
        <div class="scroll">${wedge("#647a84", true)}<i class="thumb"></i>${wedge("#647a84")}</div>
      </div>
      <div class="props"><table>
        <colgroup><col class="c0"><col class="c1"><col></colgroup>
        <thead><tr><th colspan="2">属性</th><th>值</th></tr></thead>
        <tbody>
          <tr class="cat"><th colspan="3">基本信息</th></tr>
          <tr class="field"><td class="stem"><i></i><i></i></td><th scope="row">标签</th><td class="val">结果模型:流体分析</td></tr>
          <tr class="cat"><th colspan="3">结果模型</th></tr>
          <tr class="field"><td class="stem"><i class="round"></i></td><th scope="row">结果文件</th><td class="val">[/Solving/SolvingDomain/case.foam]</td></tr>
        </tbody></table></div>
      <div class="foot"><button>视图</button><button class="active">数据</button></div>
    </aside>`;
  }

  private tools() {
    const b = (n: string, w: string, label: string) => html`<button class=${w} aria-label=${label}>${icon(n)}</button>`;
    const d = (label: string) => html`<button class="drop" aria-label=${label}>${caret()}</button>`;
    return html`<div class="tools">
      ${b("camera", "w40", "截图")}<i class="bar"></i>
      ${b("magnify", "w40", "快速缩放")}${b("broom", "w40", "清除")}${d("清除选项")}<i class="bar wide"></i>
      ${b("cube", "w36", "外形")}${d("外形选项")}${b("meshcube", "w44", "显示模式")}${d("显示选项")}<i class="bar wide"></i>
      ${b("fit", "w44", "适合窗口")}${b("axes", "w40", "视角")}${d("视角选项")}
      ${b("rotcw", "w48", "顺时针旋转")}${b("rotccw", "w44", "逆时针旋转")}<i class="dots"></i>
      <label for="time">时间:</label>
      <div class="combo"><select id="time"><option>300</option></select>${caret()}</div>
      <input class="slider" type="range" min="0" max="30" .value=${String(this.frame)} aria-label="帧"
        @input=${(e: Event) => (this.frame = Number((e.target as HTMLInputElement).value))}>
      <div class="spin"><input type="text" aria-label="帧号" .value=${String(this.frame)}>
        <div><button aria-label="增加" @click=${() => this.frame++}>${caret(true)}</button>
        <button aria-label="减少" @click=${() => this.frame--}>${caret()}</button></div></div>
      <i class="full"></i>
      ${MEDIA.map(([n, label]) => b(n, "w44", label))}
      <div class="combo rate"><select aria-label="速度"><option>1x</option></select>${caret()}</div>
    </div>`;
  }

  render() {
    const cmd = (n: string, label: string, more = false) =>
      html`<button>${icon(n)}<span>${label}</span>${more ? wedge("#6a6a6a") : nothing}</button>`;
    return html`${defs}
      <header class="titlebar">${this.quick()}<div class="title"><h1>${this.name}</h1></div></header>
      <nav class="tabs"><button class="file">文件</button>
        ${TABS.map((t) => html`<button class=${classMap({ active: t === this.tab })} @click=${() => (this.tab = t)}>${t}</button>`)}</nav>
      <section class="ribbon">
        <div class="group">${cmd("app", "App开发器")}</div>
        <div class="group">${cmd("contour", "等值线")}${cmd("cloud", "云图")}${cmd("vector", "矢量")}${cmd("stream", "流线")}</div>
        <div class="group">${cmd("curves", "选点曲线", true)}</div>
      </section>
      <main class="main">${this.side()}
        <div class="work">${this.tools()}
          <div class="stagerow">
            <div class="sliver"><div class="s-gap"></div><div class="s-sel"></div><div class="s-rule"></div><div class="s-head"></div>
              <div class="s-cat"></div><div class="s-row"></div><div class="s-cat"></div><div class="s-row">/c</div>
              <div class="s-void"></div><div class="s-foot"></div><div class="s-end"></div></div>
            <div class="stage">
              <flow-field class="field2d"></flow-field>
              <div class="caption">结果模型:流体分析</div>
              <svg class="triad" width="76" height="70" viewBox="0 0 76 70" aria-hidden="true">
                <path d="M17 60V18" stroke="#0f0"/><path d="M17 11l4 9h-8z" fill="#0f0"/>
                <path d="M17 60.500h42" stroke="#f00"/><path d="M66 60.500l-9-4v8z" fill="#f00"/>
                <rect x="13" y="56" width="8" height="8" rx="2" fill="#00f"/>
                <text class="tx" x="20" y="14" fill="#0f0">Y</text><text class="tx" x="60" y="54" fill="#f00">X</text><text class="tx" x="19" y="54" fill="#00f">Z</text>
              </svg>
            </div>
          </div>
        </div>
      </main>
      <footer class="status"></footer>`;
  }
}
